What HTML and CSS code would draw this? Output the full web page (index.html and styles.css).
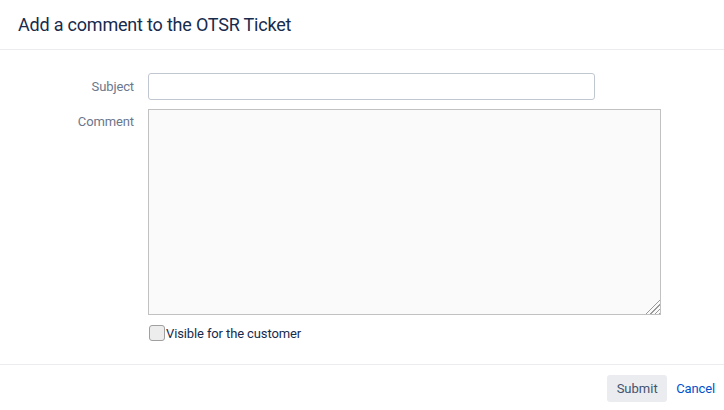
FILE: index.html
```html
<!DOCTYPE html>
<html lang="en">
<head>
    <meta charset="UTF-8">
    <meta name="viewport" content="width=device-width, initial-scale=1.0">
    <title>Add a comment to the OTSR Ticket</title>
    <link rel="stylesheet" href="styles.css">
</head>
<body>
    <div class="dialog">
        <header class="dialog-header">
            <h1>Add a comment to the OTSR Ticket</h1>
        </header>

        <form class="dialog-body" id="commentForm">
            <div class="form-row">
                <label class="field-label" for="subject">Subject</label>
                <input type="text" id="subject" class="text-input">
            </div>
            <div class="form-row">
                <label class="field-label label-top" for="comment">Comment</label>
                <textarea id="comment" class="comment-input"></textarea>
            </div>
            <div class="form-row check-row">
                <label class="check-label">
                    <input type="checkbox" class="check-box">Visible for the customer
                </label>
            </div>
        </form>

        <footer class="dialog-footer">
            <button type="submit" form="commentForm" class="btn-submit">Submit</button>
            <a href="#" class="btn-cancel">Cancel</a>
        </footer>
    </div>
</body>
</html>
```

FILE: styles.css
```css
:root {
    --text-color: #172b4d;
    --label-color: #6b778c;
    --divider: #ebecf0;
    --link-color: #0052cc;
}

* {
    margin: 0;
    padding: 0;
    box-sizing: border-box;
}

body {
    font-family: Roboto, "Noto Sans", sans-serif;
    font-size: 13px;
    letter-spacing: -0.12px;
    color: var(--text-color);
    background: #fff;
}

.dialog {
    width: 724px;
    height: 410px;
    display: flex;
    flex-direction: column;
}

.dialog-header {
    height: 50px;
    padding: 0 18px;
    display: flex;
    align-items: center;
    border-bottom: 1px solid var(--divider);
}

.dialog-header h1 {
    font-size: 18px;
    font-weight: 400;
    letter-spacing: -0.2px;
    color: var(--text-color);
    padding-bottom: 1px;
}

.dialog-body {
    flex: 1;
    padding-top: 23px;
}

.form-row {
    display: flex;
    align-items: center;
    margin-bottom: 9px;
}

.field-label {
    width: 134px;
    margin-right: 14px;
    text-align: right;
    color: var(--label-color);
}

.label-top {
    align-self: flex-start;
    padding-top: 5px;
}

.text-input {
    width: 447px;
    height: 27px;
    border: 1px solid #c1c7d0;
    border-radius: 3px;
    padding: 0 8px;
    font: inherit;
}

.comment-input {
    width: 513px;
    height: 206px;
    border: 1px solid #c1c1c1;
    background: #fafafa;
    padding: 6px 8px;
    font: inherit;
    resize: both;
}

.comment-input::-webkit-resizer {
    background:
        linear-gradient(to bottom right, #fafafa 50%, transparent 50%),
        repeating-linear-gradient(135deg, #fafafa 0 2px, #9a9a9a 2px 3px);
}

.check-row {
    margin-top: 10px;
    padding-left: 149px;
}

.check-label {
    display: flex;
    align-items: center;
    color: var(--text-color);
}

.check-box {
    appearance: none;
    width: 16px;
    height: 16px;
    border: 1px solid #a0a0a0;
    border-radius: 3px;
    background: #ededed;
    margin-right: 1px;
}

.dialog-footer {
    height: 46px;
    border-top: 1px solid var(--divider);
    display: flex;
    justify-content: flex-end;
    align-items: flex-start;
    padding: 10px 9px 0 0;
}

.btn-submit {
    width: 60px;
    height: 27px;
    border: none;
    border-radius: 3px;
    background: #ebecf0;
    color: #42526e;
    font: inherit;
}

.btn-cancel {
    margin-left: 9px;
    line-height: 27px;
    color: var(--link-color);
    text-decoration: none;
}
```
